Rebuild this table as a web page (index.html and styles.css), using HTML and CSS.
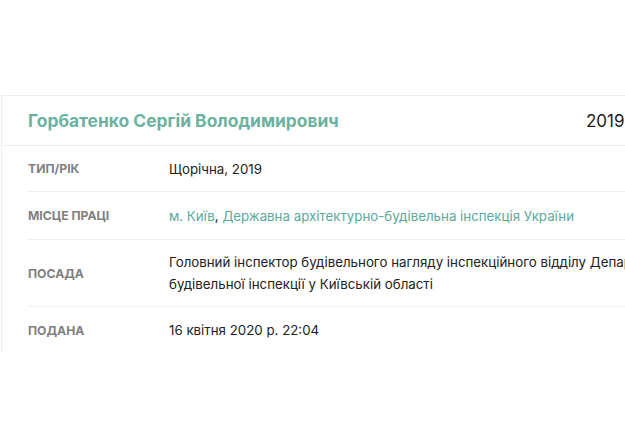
FILE: index.html
```html
<!DOCTYPE html>
<html lang="uk">
<head>
<meta charset="utf-8">
<link rel="stylesheet" href="styles.css">
</head>
<body>
<div class="page">
  <section class="card">
    <header class="card-head">
      <h1 class="name">Горбатенко Сергій Володимирович</h1>
      <span class="year">2019</span>
    </header>
    <div class="rows">
      <div class="row r1">
        <div class="label">Тип/рік</div>
        <div class="value">Щорічна, 2019</div>
      </div>
      <div class="row r2">
        <div class="label">Місце праці</div>
        <div class="value"><a class="link" href="#">м. Київ</a>, <a class="link" href="#">Державна архітектурно-будівельна інспекція України</a></div>
      </div>
      <div class="row r3">
        <div class="label">Посада</div>
        <div class="value">Головний інспектор будівельного нагляду інспекційного відділу Департаменту архітектурно-будівельної інспекції у Київській області</div>
      </div>
      <div class="row r4">
        <div class="label">Подана</div>
        <div class="value">16 квітня 2020 р. 22:04</div>
      </div>
    </div>
  </section>
</div>
</body>
</html>
```

FILE: styles.css
```css
html, body {
  margin: 0;
  padding: 0;
  background: #fff;
  overflow: hidden;
}
body {
  font-family: Inter, "Noto Sans", sans-serif;
  color: #222;
}
.page {
  padding-top: 95px;
  padding-left: 1px;
  width: 860px;
}
.card {
  border: 1px solid #eeeeee;
  border-right: none;
  border-bottom: none;
  height: 256px;
  width: 860px;
}
.card-head {
  display: flex;
  align-items: center;
  height: 49px;
  border-bottom: 1px solid #eeeeee;
  padding-left: 26px;
}
.name {
  margin: 0;
  font-size: 17.4px;
  font-weight: 700;
  color: #6bb2a0;
  width: 558px;
}
.year {
  font-size: 17px;
  color: #1d1d1d;
}
.rows {
  padding-left: 26px;
}
.row {
  display: flex;
  align-items: center;
  border-bottom: 1px solid #efefef;
}
.row.r4 { border-bottom: none; }
.r1 { height: 45px; }
.r2 { height: 47px; }
.r3 { height: 66px; }
.r4 { height: 46px; }
.label {
  width: 141px;
  flex: none;
  font-size: 12.2px;
  font-weight: 700;
  text-transform: uppercase;
  color: #808080;
}
.value {
  font-size: 13.3px;
  line-height: 22px;
  color: #222;
  width: 650px;
}
.link {
  color: #5aaa9a;
  text-decoration: none;
}
```
